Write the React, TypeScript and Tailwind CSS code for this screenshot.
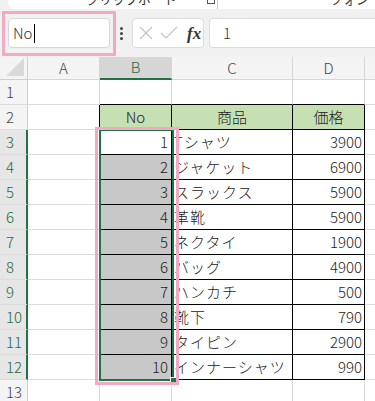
import React from 'react';

const font = { fontFamily: '"Noto Sans CJK JP", "Noto Sans", sans-serif' };

const rows: [number, string, number][] = [
  [1, 'Tシャツ', 3900],
  [2, 'ジャケット', 6900],
  [3, 'スラックス', 5900],
  [4, '革靴', 5900],
  [5, 'ネクタイ', 1900],
  [6, 'バッグ', 4900],
  [7, 'ハンカチ', 500],
  [8, '靴下', 790],
  [9, 'タイピン', 2900],
  [10, 'インナーシャツ', 990],
];

function RowHead({ n, selected }: { n: number; selected?: boolean }) {
  return (
    <div
      className={
        'flex items-center pl-[6px] text-[15px] font-light border-b border-[#dcdcdc] ' +
        (selected
          ? 'bg-[#e6e6e6] text-[#1e6b41] border-r-2 border-r-[#217346]'
          : 'bg-[#f4f4f4] text-[#444] border-r border-r-[#cfcfcf]')
      }
    >
      {n}
    </div>
  );
}

function Cell({ className = '', children }: { className?: string; children?: React.ReactNode }) {
  return (
    <div className={'flex items-center text-[15px] font-light text-[#222] border-r border-b overflow-hidden whitespace-nowrap ' + className}>
      {children}
    </div>
  );
}

export default function App() {
  return (
    <div className="w-[375px] h-[401px] overflow-hidden bg-[#f1f1f1] relative" style={font}>
      {/* ribbon bottom edge, group labels cut off by the scroll */}
      <div className="ml-[8px] h-[9px] bg-white rounded-bl-[6px] overflow-hidden relative text-[13px] text-[#333]">
        <span className="absolute left-[78px] -top-[9px] leading-[16px]">クリップボード</span>
        <span className="absolute left-[199px] -top-[6px] w-[8px] h-[10px] border border-[#555]"></span>
        <span className="absolute left-[209px] top-0 w-px h-[9px] bg-[#c8c8c8]"></span>
        <span className="absolute left-[322px] -top-[9px] leading-[16px]">フォント</span>
      </div>

      {/* formula bar */}
      <div className="h-[48px] flex items-center">
        <div className="relative ml-[8px] w-[102px] h-[30px]">
          <div className="w-full h-full bg-white rounded-[4px] border border-[#d6d6d6] flex items-center pl-[4px] text-[15px] font-light text-[#333]">
            No<span className="w-px h-[19px] bg-black ml-px"></span>
          </div>
          <div className="absolute -left-[6px] -top-[7px] -right-[6px] -bottom-[8px] border-[3px] border-[#f2a9c3]"></div>
        </div>
        <div className="ml-[9px] w-[5px] flex flex-col items-center gap-[2px]">
          <span className="w-[3px] h-[3px] bg-[#444] rounded-full"></span>
          <span className="w-[3px] h-[3px] bg-[#444] rounded-full"></span>
          <span className="w-[3px] h-[3px] bg-[#444] rounded-full"></span>
        </div>
        <div className="ml-[8px] w-[72px] h-[30px] bg-white rounded-[4px] border border-[#dcdcdc] flex items-center pl-[5px]">
          <svg width="14" height="14" viewBox="0 0 14 14" className="ml-[1px]">
            <path d="M1 1 L13 13 M13 1 L1 13" stroke="#c4c4c4" strokeWidth="1.2" fill="none" />
          </svg>
          <svg width="18" height="14" viewBox="0 0 18 14" className="ml-[7px]">
            <path d="M1 7 L6 12 L17 1" stroke="#c4c4c4" strokeWidth="1.2" fill="none" />
          </svg>
          <span
            className="ml-[9px] text-[17px] italic font-bold text-[#333] leading-none"
            style={{ fontFamily: '"Liberation Serif", "DejaVu Serif", serif' }}
          >
            fx
          </span>
        </div>
        <div className="ml-[5px] flex-1 h-[30px] bg-white rounded-l-[4px] border border-r-0 border-[#dcdcdc] flex items-center pl-[13px] text-[15px] font-light text-[#333]">
          1
        </div>
      </div>

      {/* sheet */}
      <div className="relative grid grid-cols-[28px_72px_72px_121px_72px_60px] grid-rows-[23px_repeat(13,25px)] bg-white">
        {/* header row */}
        <div className="bg-[#f4f4f4] border-r border-b border-[#cfcfcf] relative">
          <svg width="18" height="18" viewBox="0 0 18 18" className="absolute right-[3px] bottom-[3px]">
            <path d="M18 0 L18 18 L0 18 Z" fill="#d9d9d9" />
          </svg>
        </div>
        <div className="bg-[#f4f4f4] border-r border-b border-[#d6d6d6] flex items-center justify-center text-[15px] font-light text-[#444]">A</div>
        <div className="bg-[#d6d6d6] border-r border-[#d6d6d6] border-b-2 border-b-[#217346] flex items-center justify-center text-[15px] font-light text-[#1e6b41]">B</div>
        <div className="bg-[#f4f4f4] border-r border-b border-[#d6d6d6] flex items-center justify-center text-[15px] font-light text-[#444]">C</div>
        <div className="bg-[#f4f4f4] border-r border-b border-[#d6d6d6] flex items-center justify-center text-[15px] font-light text-[#444]">D</div>
        <div className="bg-[#f4f4f4] border-b border-[#d6d6d6]"></div>

        {/* row 1 */}
        <RowHead n={1} />
        <Cell className="border-[#dcdcdc]" />
        <Cell className="border-r-[#dcdcdc] border-b-black" />
        <Cell className="border-r-[#dcdcdc] border-b-black" />
        <Cell className="border-r-[#dcdcdc] border-b-black" />
        <Cell className="border-[#dcdcdc]" />

        {/* row 2 */}
        <RowHead n={2} />
        <Cell className="border-r-black border-b-[#dcdcdc]" />
        <Cell className="border-black bg-[#c6e0b4] justify-center">No</Cell>
        <Cell className="border-black bg-[#c6e0b4] justify-center">商品</Cell>
        <Cell className="border-black bg-[#c6e0b4] justify-center">価格</Cell>
        <Cell className="border-[#dcdcdc]" />

        {rows.map(([no, name, price], i) => (
          <React.Fragment key={no}>
            <RowHead n={i + 3} selected />
            <Cell className="border-r-black border-b-[#dcdcdc]" />
            <Cell className={'border-black justify-end pr-[3px] ' + (i === 0 ? 'bg-white' : 'bg-[#c8c8c8]')}>{no}</Cell>
            <Cell className="border-black pl-[2px] text-[14px] tracking-[1px]">{name}</Cell>
            <Cell className="border-black justify-end pr-[2px]">{price}</Cell>
            <Cell className="border-[#dcdcdc]" />
          </React.Fragment>
        ))}

        {/* row 13 */}
        <RowHead n={13} />
        <Cell className="border-[#dcdcdc]" />
        <Cell className="border-[#dcdcdc]" />
        <Cell className="border-[#dcdcdc]" />
        <Cell className="border-[#dcdcdc]" />
        <Cell className="border-[#dcdcdc]" />

        {/* selection overlay */}
        <div className="absolute left-[99px] top-[72px] w-[75px] h-[252px] border-2 border-[#217346] pointer-events-none"></div>
        <div className="absolute left-[170px] top-[320px] w-[7px] h-[7px] bg-[#217346] border border-white pointer-events-none"></div>
        {/* highlight annotation */}
        <div className="absolute left-[95px] top-[70px] w-[84px] h-[258px] border-[3px] border-[#f2a9c3] pointer-events-none"></div>
      </div>
    </div>
  );
}
